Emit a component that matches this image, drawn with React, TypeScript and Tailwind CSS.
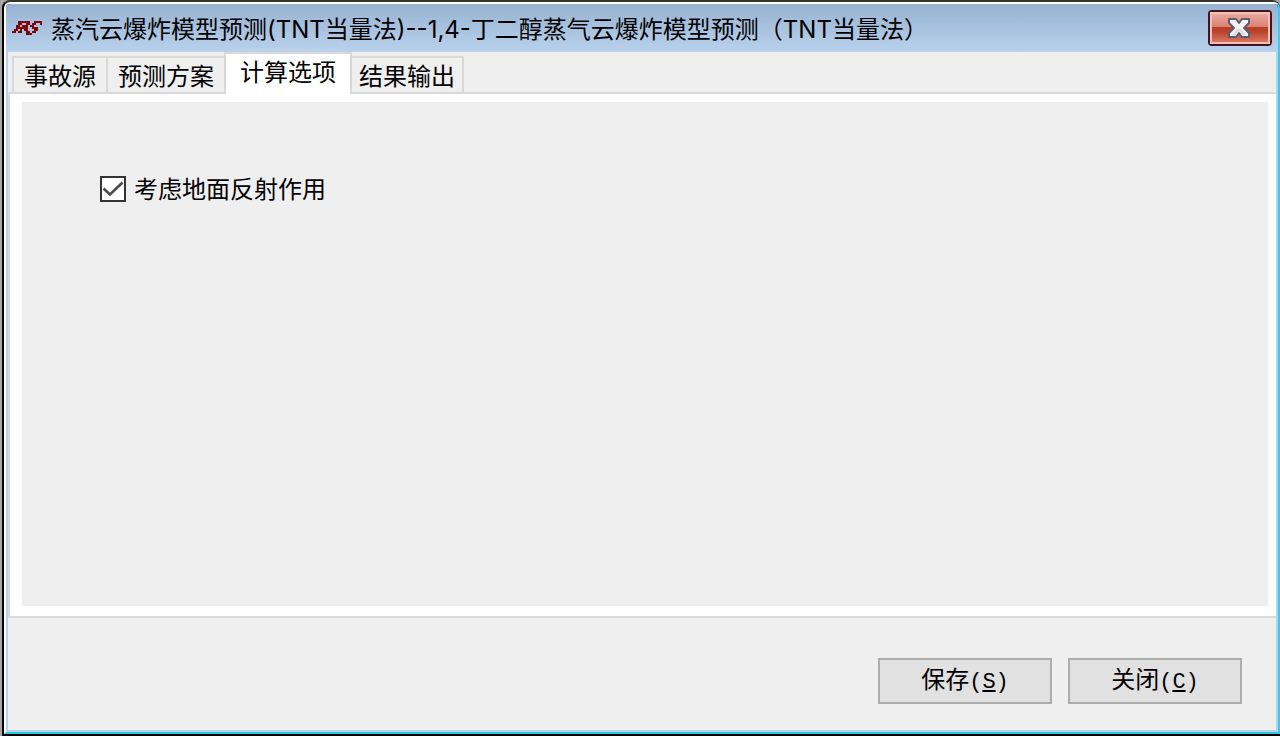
import { useState } from "react"

const TABS = [
    { label: "事故源", className: "w-[94px]" },
    { label: "预测方案", className: "w-[118px]" },
    { label: "计算选项", className: "w-[128px]" },
    { label: "结果输出", className: "w-[112px] border-r-2" },
]

// "#" is a filled cell of the logo
const LOGO = [
    "...######..####",
    "...##..##.##..#",
    "..##.###.##....",
    "..######..###..",
    ".##.#.##...##..",
    "##.##..##.##...",
    ".......###.....",
]

function Logo() {
    return (
        <svg width="30" height="14" viewBox="0 0 15 7" shapeRendering="crispEdges" fill="#7d0408" aria-hidden="true">
            {LOGO.map((row, y) =>
                row.split("").map((c, x) => (c === "#" ? <rect key={`${x}-${y}`} x={x} y={y} width="1" height="1" /> : null)),
            )}
        </svg>
    )
}

function CloseIcon() {
    return (
        <svg width="24" height="20" viewBox="0 0 24 20" fill="none" aria-hidden="true">
            <path
                d="M1 1h7l3 4 3-4h7v4l-5 5 5 5v4h-7l-3-4-3 4H1v-4l5-5-5-5z"
                fill="#f4f4f4"
                stroke="#5a5e6e"
                strokeWidth="2"
                strokeLinejoin="round"
            />
            <path d="M6 17h2l3-4 3 4h4l-5-6H9l-5 6z" fill="#dedede" />
        </svg>
    )
}

export default function App() {
    const [tab, setTab] = useState(2)
    const [reflect, setReflect] = useState(true)

    return (
        <div className="min-h-screen flex flex-col bg-[#a6a6a6] pl-0.5 font-['Noto_Sans_CJK_SC',sans-serif] text-2xl leading-8 text-black">
            <div className="flex-1 flex flex-col rounded-t-lg bg-black border-l-2 border-y-2 border-l-black border-b-black border-t-[#3a3535]">
                <div className="flex-1 flex flex-col rounded-t-md overflow-hidden border-2 border-l-white border-t-white border-r-[#35cdf0] border-b-[#2cc8e0]">
                    {/* Title bar */}
                    <header className="flex h-12 items-center bg-linear-to-b from-[#97b3d1] to-[#b9d1ec] pl-1.5 pr-1.5">
                        <Logo />
                        <h1 className="flex-1 pt-[3px] pl-[9px] font-['Inter','Noto_Sans_CJK_SC',sans-serif]">
                            蒸汽云爆炸模型预测(TNT当量法)--1,4-丁二醇蒸气云爆炸模型预测（TNT当量法）
                        </h1>
                        <button
                            type="button"
                            aria-label="关闭窗口"
                            className="h-9 w-16 rounded-sm border-2 border-[#46121f] bg-[#46121f]"
                        >
                            <span className="flex h-full w-full items-center justify-center border-2 border-[#f3c0b8] bg-[linear-gradient(to_bottom,#e9a89e_0%,#d98373_45%,#b53b26_45%,#b9452f_65%,#dc7560_100%)]">
                                <CloseIcon />
                            </span>
                        </button>
                    </header>

                    <div className="flex-1 flex flex-col border-x-2 border-b-2 border-[#b8d0ec] bg-[#efefef]">
                        {/* Tabs */}
                        <nav role="tablist" className="flex h-10 items-end pl-1">
                            {TABS.map((t, i) => (
                                <button
                                    key={t.label}
                                    type="button"
                                    role="tab"
                                    aria-selected={tab === i}
                                    onClick={() => setTab(i)}
                                    className={`${t.className} border-[#d9d9d9] border-t-2 ${
                                        tab === i
                                            ? "relative -mb-0.5 h-[42px] border-x-2 bg-white pb-1.5"
                                            : `h-9 ${i === tab + 1 ? "" : "border-l-2"}`
                                    }`}
                                >
                                    {t.label}
                                </button>
                            ))}
                        </nav>

                        {/* Panel */}
                        <main className="flex-1 flex flex-col border-l-2 border-y-2 border-[#d9d9d9] bg-white pt-2 pr-2 pb-2.5 pl-3">
                            <div className="flex-1 bg-[#efefef] pt-[70px] pl-[78px]">
                                {tab === 2 && (
                                    <label className="inline-flex items-center">
                                        <span className="grid pt-0.5">
                                            <input
                                                type="checkbox"
                                                checked={reflect}
                                                onChange={(e) => setReflect(e.target.checked)}
                                                className="col-start-1 row-start-1 h-[26px] w-[26px] appearance-none border-2 border-[#333] bg-white"
                                            />
                                            {reflect && (
                                                <svg
                                                    className="pointer-events-none col-start-1 row-start-1"
                                                    width="26"
                                                    height="26"
                                                    viewBox="0 0 26 26"
                                                    fill="none"
                                                    stroke="#4a4a4a"
                                                    strokeWidth="2.6"
                                                    aria-hidden="true"
                                                >
                                                    <path d="M3.5 12.5l6.5 6L22.5 6.5" />
                                                </svg>
                                            )}
                                        </span>
                                        <span className="pl-2">考虑地面反射作用</span>
                                    </label>
                                )}
                            </div>
                        </main>

                        {/* Actions */}
                        <footer className="flex justify-end gap-4 pt-10 pr-[34px] pb-[26px]">
                            <button type="button" className="h-[46px] w-[174px] border-2 border-[#adadad] bg-[#e1e1e1] pb-0.5">
                                保存<span className="font-['Liberation_Mono',monospace] text-[22px]">(<u>S</u>)</span>
                            </button>
                            <button type="button" className="h-[46px] w-[174px] border-2 border-[#adadad] bg-[#e1e1e1] pb-0.5">
                                关闭<span className="font-['Liberation_Mono',monospace] text-[22px]">(<u>C</u>)</span>
                            </button>
                        </footer>
                    </div>
                </div>
            </div>
        </div>
    )
}
